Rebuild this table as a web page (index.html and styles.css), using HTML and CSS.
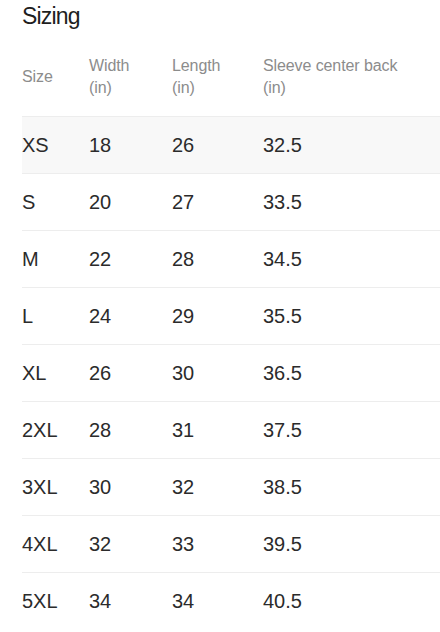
FILE: index.html
```html
<!DOCTYPE html>
<html>
<head>
<meta charset="utf-8">
<link rel="stylesheet" href="styles.css">
</head>
<body>
<section class="sizing">
  <h2 class="title">Sizing</h2>
  <div class="table">
    <div class="row head">
      <div class="cell">Size</div>
      <div class="cell">Width<br>(in)</div>
      <div class="cell">Length<br>(in)</div>
      <div class="cell">Sleeve center back<br>(in)</div>
    </div>
    <div class="row body hover"><div class="cell">XS</div><div class="cell">18</div><div class="cell">26</div><div class="cell">32.5</div></div>
    <div class="row body"><div class="cell">S</div><div class="cell">20</div><div class="cell">27</div><div class="cell">33.5</div></div>
    <div class="row body"><div class="cell">M</div><div class="cell">22</div><div class="cell">28</div><div class="cell">34.5</div></div>
    <div class="row body"><div class="cell">L</div><div class="cell">24</div><div class="cell">29</div><div class="cell">35.5</div></div>
    <div class="row body"><div class="cell">XL</div><div class="cell">26</div><div class="cell">30</div><div class="cell">36.5</div></div>
    <div class="row body"><div class="cell">2XL</div><div class="cell">28</div><div class="cell">31</div><div class="cell">37.5</div></div>
    <div class="row body"><div class="cell">3XL</div><div class="cell">30</div><div class="cell">32</div><div class="cell">38.5</div></div>
    <div class="row body"><div class="cell">4XL</div><div class="cell">32</div><div class="cell">33</div><div class="cell">39.5</div></div>
    <div class="row body"><div class="cell">5XL</div><div class="cell">34</div><div class="cell">34</div><div class="cell">40.5</div></div>
  </div>
</section>
</body>
</html>
```

FILE: styles.css
```css
html, body {
  margin: 0;
  padding: 0;
  background: #ffffff;
}
body {
  font-family: "Liberation Sans", Arial, sans-serif;
  color: #2a2a2a;
  overflow: hidden;
}
.sizing {
  padding-left: 22px;
}
.title {
  margin: 0 0 7px 0;
  font-size: 23px;
  font-weight: 400;
  line-height: 32px;
  color: #1e1e1e;
  letter-spacing: -0.8px;
}
.table {
  display: flex;
  flex-direction: column;
}
.row {
  display: grid;
  grid-template-columns: 67px 83px 91px 1fr;
  align-items: center;
}
.head {
  padding: 16px 0 17px 0;
  font-size: 16px;
  line-height: 22px;
  color: #8c8c8c;
  letter-spacing: -0.1px;
}
.body {
  height: 57px;
  box-sizing: border-box;
  border-top: 1px solid #ededed;
  font-size: 20px;
  color: #2b2b2b;
}
.hover {
  background: #f8f8f8;
}
```
